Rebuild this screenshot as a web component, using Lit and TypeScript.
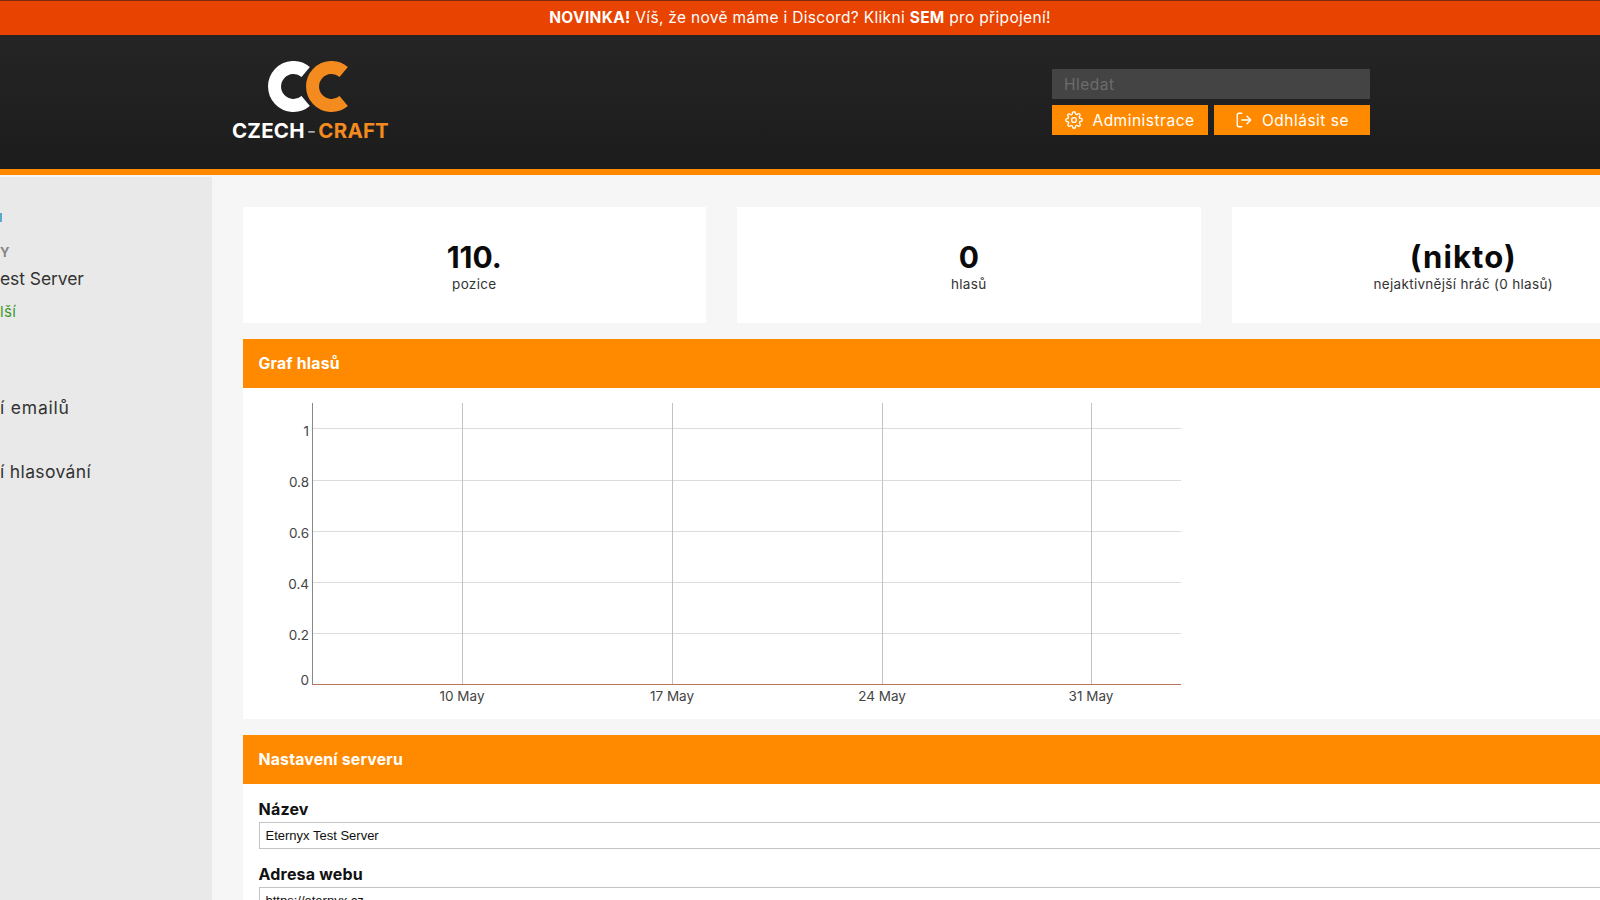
import { LitElement, html, svg, css } from 'lit';
import { customElement } from 'lit/decorators.js';

// chart scale, in px inside the chart svg (svg starts at the card's corner)
const yTicks = [
  { label: '1', y: 40, dy: 8 },
  { label: '0.8', y: 92, dy: 7 },
  { label: '0.6', y: 143, dy: 7 },
  { label: '0.4', y: 194, dy: 7 },
  { label: '0.2', y: 245, dy: 7 },
  { label: '0', y: 296, dy: 1 },
];
const xTicks = [
  { label: '10 May', x: 219 },
  { label: '17 May', x: 429 },
  { label: '24 May', x: 639 },
  { label: '31 May', x: 848 },
];
const stats = [
  { value: '110.', label: 'pozice', cls: '' },
  { value: '0', label: 'hlasů', cls: '' },
  { value: '(nikto)', label: 'nejaktivnější hráč (0 hlasů)', cls: 'word' },
];

@customElement('app-root')
export class AppRoot extends LitElement {
  static styles = css`
    :host {
      display: block;
      width: 1600px;
      height: 900px;
      overflow: hidden;
      background: #f6f6f6;
      font-family: 'Inter', 'Liberation Sans', sans-serif;
      color: #222;
    }
    .banner {
      height: 34px;
      border-top: 1px solid #7a2a08;
      background: #e84300;
      color: #fff;
      text-align: center;
      font-size: 15.5px;
      line-height: 34px;
      letter-spacing: 0.32px;
    }
    .top {
      height: 134px;
      display: flex;
      background: linear-gradient(#252525, #1c1c1c);
      border-bottom: 6px solid #ff8a00;
      padding-left: 232px;
    }
    .logo {
      width: 158px;
      padding-top: 26px;
    }
    .logo svg { display: block; margin-left: 36px; }
    .logo-text {
      margin-top: 6px;
      font-size: 20.5px;
      font-weight: 700;
      line-height: 24px;
      color: #fff;
      white-space: nowrap;
      letter-spacing: 0.2px;
    }
    .logo-text span { color: #f48b1f; }
    .logo-text i { font-style: normal; color: #aaa; font-weight: 400; margin: 0 2px; }
    .tools {
      margin-left: 662px;
      width: 318px;
      padding-top: 34px;
      display: flex;
      flex-direction: column;
      gap: 6px;
    }
    .search {
      height: 30px;
      background: #444;
      color: #6c6c6c;
      font-size: 15.5px;
      line-height: 31px;
      padding-left: 12px;
      letter-spacing: 0.5px;
    }
    .btns { display: flex; gap: 6px; }
    .btn {
      flex: 1;
      height: 30px;
      display: flex;
      align-items: center;
      justify-content: center;
      gap: 9px;
      background: #ff8a00;
      color: #fff;
      font-size: 15.5px;
      letter-spacing: 0.5px;
    }
    .btn svg { display: block; }
    .layout { display: flex; margin-top: 2px; height: 723px; }
    .side {
      flex: none;
      width: 212px;
      background: #e9e9e9;
      font-size: 17.5px;
      color: #333;
    }
    .sliver { width: 2px; height: 9px; margin-top: 36px; background: #5aa9c8; }
    .side-head { margin-top: 24px; font-size: 13px; font-weight: 700; line-height: 12px; color: #858585; }
    .side-item { line-height: 20px; letter-spacing: 0.35px; white-space: nowrap; }
    .server { margin-top: 11px; letter-spacing: -0.08px; }
    .more { margin-top: 13px; color: #3f9a2e; font-size: 15px; }
    .emails { margin-top: 76px; letter-spacing: 0.8px; }
    .votes { margin-top: 44px; }
    .main { flex: none; width: 1452.5px; padding: 30px 0 0 30.5px; }
    .stats {
      display: grid;
      grid-template-columns: repeat(3, 1fr);
      gap: 31px;
    }
    .stat {
      height: 115px;
      padding-top: 1px;
      background: #fff;
      text-align: center;
      display: flex;
      flex-direction: column;
      justify-content: center;
    }
    .stat b { font-size: 30px; line-height: 36px; font-weight: 700; color: #0a0a0a; }
    .stat b.word { font-size: 31px; letter-spacing: 1.1px; }
    .stat span { font-size: 13.5px; line-height: 18px; color: #333; letter-spacing: 0.3px; }
    .sec-head {
      margin-top: 16px;
      height: 49px;
      padding-left: 16px;
      background: #ff8a00;
      color: #fff;
      font-size: 15.8px;
      font-weight: 700;
      line-height: 49px;
      letter-spacing: 0.2px;
    }
    .chart { background: #fff; height: 331px; }
    .chart svg { display: block; }
    .chart text { font-family: 'Inter', 'Liberation Sans', sans-serif; font-size: 13.5px; fill: #444; }
    .form { background: #fff; padding: 15px 16px 0; }
    .form label {
      display: block;
      font-size: 16px;
      font-weight: 700;
      line-height: 20px;
      color: #111;
      letter-spacing: 0.2px;
      margin-bottom: 3px;
    }
    .field {
      height: 25px;
      border: 1px solid #c4c4c4;
      margin-bottom: 15px;
      padding-left: 6px;
      font-family: 'Liberation Sans', Arial, sans-serif;
      font-size: 13px;
      line-height: 25px;
      color: #111;
    }
  `;

  private chart() {
    return html`<svg width="960" height="331" viewBox="0 0 960 331">
      ${yTicks.map((t) => svg`
        <line x1="69" x2="938" y1=${t.y + 0.5} y2=${t.y + 0.5} stroke=${t.y === 296 ? '#b8745a' : '#dcdcdc'} stroke-width="1"></line>
        <text x="66" y=${t.y + t.dy} text-anchor="end">${t.label}</text>`)}
      ${xTicks.map((t) => svg`
        <line x1=${t.x + 0.5} x2=${t.x + 0.5} y1="15" y2="296" stroke="#c2c2c2" stroke-width="1"></line>
        <text x=${t.x} y="313" text-anchor="middle">${t.label}</text>`)}
      <line x1="69.5" x2="69.5" y1="15" y2="296" stroke="#888" stroke-width="1"></line>
    </svg>`;
  }

  render() {
    return html`
      <div class="banner"><b>NOVINKA!</b> Víš, že nově máme i Discord? Klikni <b>SEM</b> pro připojení!</div>
      <div class="top">
        <div class="logo">
          <svg width="84" height="52" viewBox="0 0 84 52">
            <path d="M37.7 10.9 A19 19 0 1 0 37.7 40.1" fill="none" stroke="#fff" stroke-width="13"></path>
            <path d="M75.7 10.9 A19 19 0 1 0 75.7 40.1" fill="none" stroke="#f48b1f" stroke-width="13"></path>
          </svg>
          <div class="logo-text">CZECH<i>-</i><span>CRAFT</span></div>
        </div>
        <div class="tools">
          <div class="search">Hledat</div>
          <div class="btns">
            <div class="btn">
              <svg width="18" height="18" viewBox="0 0 24 24" fill="none" stroke="#fff" stroke-width="1.8" stroke-linecap="round" stroke-linejoin="round">
                <circle cx="12" cy="12" r="3.2"></circle>
                <path d="M19.4 15a1.65 1.65 0 0 0 .33 1.82l.06.06a2 2 0 1 1-2.83 2.83l-.06-.06a1.65 1.65 0 0 0-2.8 1.17V21a2 2 0 1 1-4 0v-.09a1.65 1.65 0 0 0-2.8-1.12l-.06.06a2 2 0 1 1-2.83-2.83l.06-.06a1.65 1.65 0 0 0-1.17-2.8H3a2 2 0 1 1 0-4h.09a1.65 1.65 0 0 0 1.12-2.8l-.06-.06a2 2 0 1 1 2.83-2.83l.06.06a1.65 1.65 0 0 0 2.8-1.17V3a2 2 0 1 1 4 0v.09a1.65 1.65 0 0 0 2.8 1.12l.06-.06a2 2 0 1 1 2.83 2.83l-.06.06a1.65 1.65 0 0 0 1.17 2.8H21a2 2 0 1 1 0 4h-.09a1.65 1.65 0 0 0-1.51 1z"></path>
              </svg>
              Administrace
            </div>
            <div class="btn">
              <svg width="18" height="18" viewBox="0 0 24 24" fill="none" stroke="#fff" stroke-width="1.8" stroke-linecap="round" stroke-linejoin="round">
                <path d="M9 3H5a2 2 0 0 0-2 2v14a2 2 0 0 0 2 2h4"></path>
                <path d="M9 12h12M16 7l5 5-5 5"></path>
              </svg>
              Odhlásit se
            </div>
          </div>
        </div>
      </div>
      <div class="layout">
        <div class="side">
          <div class="sliver"></div>
          <div class="side-head">Y</div>
          <div class="side-item server">est Server</div>
          <div class="side-item more">lší</div>
          <div class="side-item emails">í emailů</div>
          <div class="side-item votes">í hlasování</div>
        </div>
        <div class="main">
          <div class="stats">
            ${stats.map((s) => html`<div class="stat"><b class=${s.cls}>${s.value}</b><span>${s.label}</span></div>`)}
          </div>
          <div class="sec-head">Graf hlasů</div>
          <div class="chart">${this.chart()}</div>
          <div class="sec-head">Nastavení serveru</div>
          <div class="form">
            <label>Název</label>
            <div class="field">Eternyx Test Server</div>
            <label>Adresa webu</label>
            <div class="field">https://eternyx.cz</div>
          </div>
        </div>
      </div>
    `;
  }
}
